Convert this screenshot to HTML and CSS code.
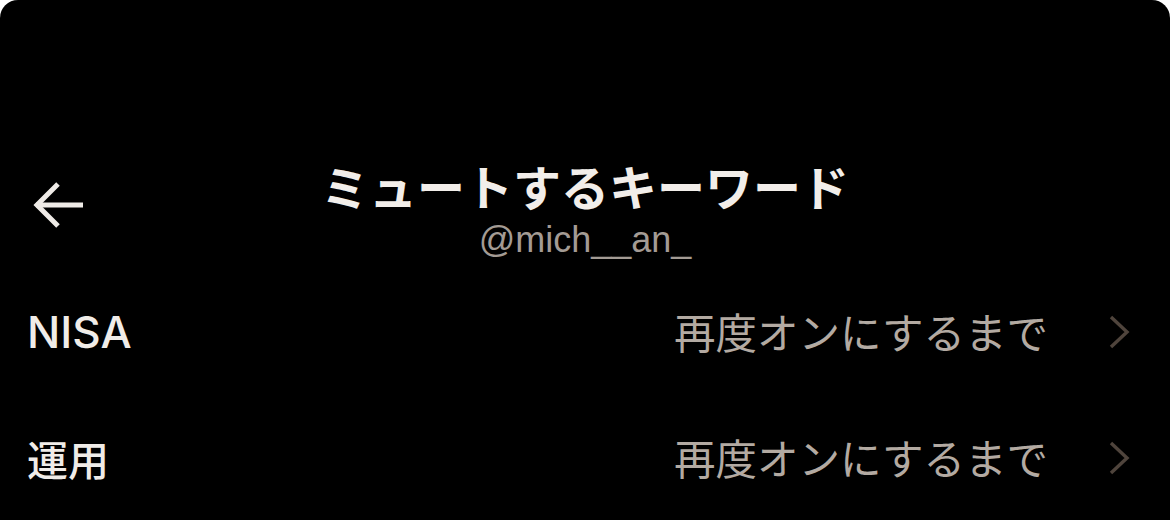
FILE: index.html
```html
<!DOCTYPE html>
<html lang="ja">
<head>
<meta charset="utf-8">
<title>ミュートするキーワード</title>
<link rel="stylesheet" href="styles.css">
</head>
<body>
<div class="screen">
  <header class="header">
    <div class="back">
      <svg width="52" height="46" viewBox="0 0 52 46" fill="none" stroke="#efebe7" stroke-width="5" stroke-linecap="butt">
        <path d="M3 23 H50"/>
        <path d="M25 2 L4 23 L25 44"/>
      </svg>
    </div>
    <div class="titles">
      <div class="title">ミュートするキーワード</div>
      <div class="subtitle">@mich__an_</div>
    </div>
    <div></div>
  </header>
  <div class="list">
    <div class="row">
      <div class="label latin">NISA</div>
      <div class="value">再度オンにするまで</div>
      <svg class="chev" width="22" height="34" viewBox="0 0 22 34" fill="none" stroke="#4f443c" stroke-width="3.4">
        <path d="M3 2 L19 17 L3 32"/>
      </svg>
    </div>
    <div class="row">
      <div class="label">運用</div>
      <div class="value">再度オンにするまで</div>
      <svg class="chev" width="22" height="34" viewBox="0 0 22 34" fill="none" stroke="#4f443c" stroke-width="3.4">
        <path d="M3 2 L19 17 L3 32"/>
      </svg>
    </div>
  </div>
</div>
</body>
</html>
```

FILE: styles.css
```css
html, body {
  margin: 0;
  padding: 0;
  background: #ffffff;
}
.screen {
  width: 1170px;
  height: 520px;
  background: #000000;
  border-radius: 18px 18px 0 0;
  overflow: hidden;
  font-family: "Liberation Sans", "Noto Sans CJK JP", sans-serif;
}
.header {
  display: grid;
  grid-template-columns: 1fr auto 1fr;
  align-items: center;
  padding-top: 157px;
}
.back {
  padding-left: 33px;
  display: flex;
  align-items: center;
  margin-top: -7px;
}
.back svg {
  display: block;
}
.titles {
  display: flex;
  flex-direction: column;
  align-items: center;
}
.title {
  font-family: "Noto Sans CJK JP", sans-serif;
  font-weight: 700;
  font-size: 48px;
  line-height: 56px;
  color: #f2eeea;
}
.subtitle {
  margin-top: 7px;
  font-family: "Liberation Sans", sans-serif;
  font-size: 36px;
  line-height: 40px;
  color: #a39b94;
}
.list {
  padding-top: 9px;
}
.row {
  height: 126px;
  display: flex;
  align-items: center;
  padding: 0 40px 0 27px;
}
.label {
  flex: 1;
  font-family: "Noto Sans CJK JP", sans-serif;
  font-weight: 500;
  font-size: 41px;
  color: #f0ece8;
}
.label.latin {
  font-family: "Inter", sans-serif;
  font-weight: 500;
  font-size: 44px;
}
.value {
  font-family: "Noto Sans CJK JP", sans-serif;
  font-size: 41.5px;
  color: #b3aaa2;
  margin-right: 60px;
  margin-top: -2px;
}
.chev {
  display: block;
}
```
